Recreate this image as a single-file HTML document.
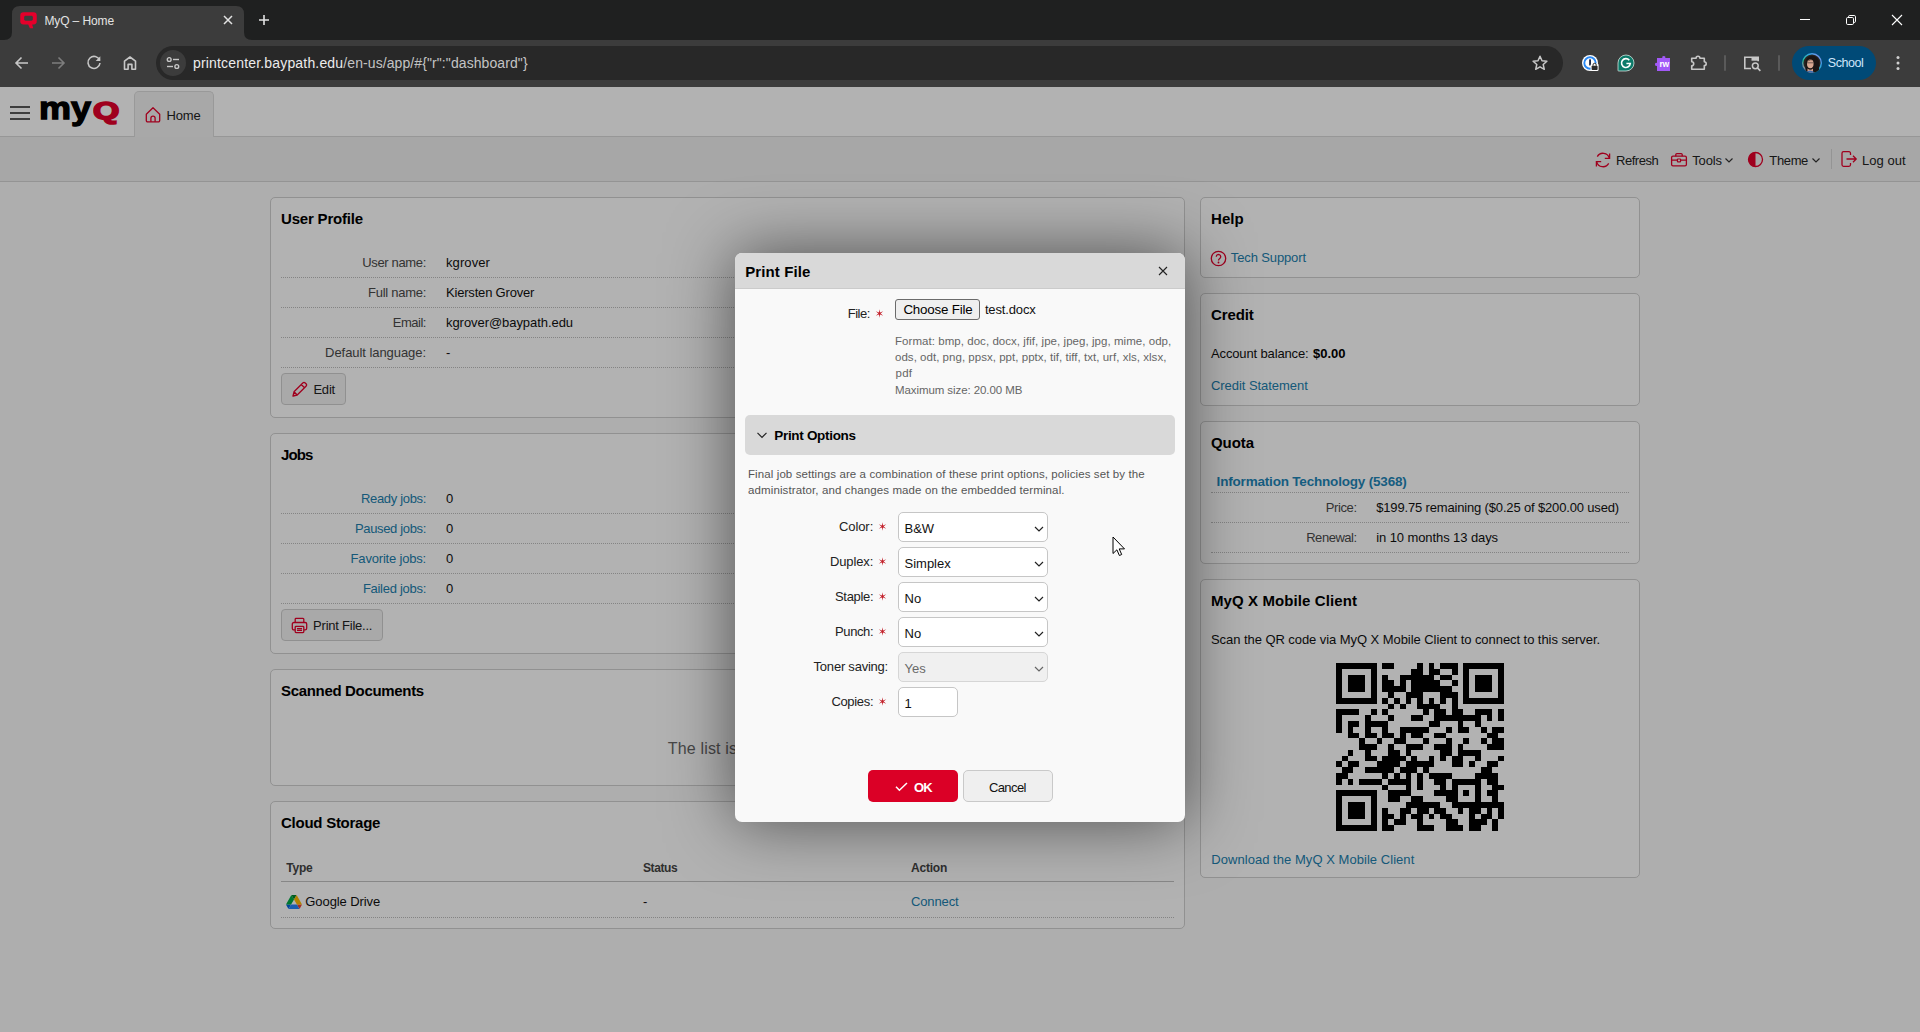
<!DOCTYPE html>
<html lang="en"><head><meta charset="utf-8"><title>MyQ – Home</title>
<style>
html,body{margin:0;padding:0;background:#3c3c3c}
#root{position:relative;width:1920px;height:1032px;overflow:hidden;font-family:'Liberation Sans',sans-serif;font-size:13px}
#root div,#root svg,#root .t{position:absolute;box-sizing:border-box}
#chrome,#page,#dlgwrap{left:0;top:0;width:1920px;height:1032px}
#overlay{left:0;top:87px;width:1920px;height:945px;background:rgba(0,0,0,.3)}
#dlgwrap{pointer-events:none}
.t{white-space:pre;display:block}
.dot{border-top:1px dotted #bdbdbd;height:0}
.panel{background:#fff;border:1px solid #d0d0d0;border-radius:5px}
.btn{background:#f3f3f3;border:1px solid #cfcfcf;border-radius:4px}
.sel{background:#fff;border:1px solid #c6c6c6;border-radius:5px}

</style></head>
<body>
<div id="root">
<div id="chrome">
<div style="left:0px;top:0px;width:1920px;height:40px;background:#1f2020"></div>
<div style="left:0px;top:40px;width:1920px;height:47px;background:#3c3c3c"></div>
<svg style="left:4px;top:6px;" width="248" height="34" viewBox="0 0 248 34"><path d="M0 34 Q8 34 8 26 V8 Q8 0 16 0 H232 Q240 0 240 8 V26 Q240 34 248 34 Z" fill="#3c3c3c"/></svg>
<svg style="left:18.5px;top:10.5px;" width="19" height="19" viewBox="0 0 18 18"><path d="M4.2 1.2h9.6a3 3 0 0 1 3 3v5.6a3 3 0 0 1-3 3h-1.3l1 3.6h-3.2l-1.6-3.6H4.2a3 3 0 0 1-3-3V4.2a3 3 0 0 1 3-3z" fill="#e4002b"/><rect x="4.9" y="4.6" width="8.2" height="4.6" rx="1.4" fill="#3c3c3c"/></svg>
<svg style="left:220px;top:12px;" width="16" height="16" viewBox="0 0 16 16"><path d="M4 4l8 8M12 4l-8 8" stroke="#e3e3e3" stroke-width="1.5" fill="none"/></svg>
<svg style="left:256px;top:12px;" width="16" height="16" viewBox="0 0 16 16"><path d="M8 3v10M3 8h10" stroke="#e3e3e3" stroke-width="1.6" fill="none"/></svg>
<svg style="left:1799px;top:14px;" width="12" height="12" viewBox="0 0 12 12"><path d="M1 5.500h10" stroke="#fff" stroke-width="1"/></svg>
<svg style="left:1845px;top:14px;" width="12" height="12" viewBox="0 0 12 12"><rect x="1.5" y="3.5" width="7" height="7" rx="1.2" fill="none" stroke="#fff"/><path d="M3.500 3.200V2.800a1.300 1.300 0 0 1 1.300-1.300H9.200a1.300 1.300 0 0 1 1.300 1.300V7.200a1.300 1.300 0 0 1-1.300 1.300H8.800" fill="none" stroke="#fff"/></svg>
<svg style="left:1891px;top:14px;" width="12" height="12" viewBox="0 0 12 12"><path d="M1 1l10 10M11 1L1 11" stroke="#fff" stroke-width="1.1"/></svg>
<svg style="left:13px;top:54px;" width="18" height="18" viewBox="0 0 18 18"><path d="M15 9H3.500M8.500 3.500L3 9l5.500 5.500" fill="none" stroke="#c7c7c7" stroke-width="1.6"/></svg>
<svg style="left:49px;top:54px;" width="18" height="18" viewBox="0 0 18 18"><path d="M3 9h11.500M9.500 3.500L15 9l-5.500 5.500" fill="none" stroke="#7d7d7d" stroke-width="1.6"/></svg>
<svg style="left:85px;top:54px;" width="18" height="18" viewBox="0 0 18 18"><path d="M14.600 6.200A6 6 0 1 0 15 9" fill="none" stroke="#c7c7c7" stroke-width="1.6"/><path d="M15.300 2.300v4.600h-4.600z" fill="#c7c7c7"/></svg>
<svg style="left:121px;top:54px;" width="18" height="18" viewBox="0 0 18 18"><path d="M3.500 15.200V7.200L9 3l5.500 4.200v8h-3.600v-4.800H7.100v4.800z" fill="none" stroke="#c7c7c7" stroke-width="1.6" stroke-linejoin="round"/></svg>
<div style="left:156px;top:46px;width:1407px;height:34px;background:#282828;border-radius:17px"></div>
<div style="left:160px;top:50px;width:26px;height:26px;background:#3c3c3c;border-radius:13px"></div>
<svg style="left:165px;top:55px;" width="16" height="16" viewBox="0 0 16 16"><circle cx="4.200" cy="4.500" r="1.900" fill="none" stroke="#c7c7c7" stroke-width="1.400"/><path d="M8 4.500h6" stroke="#c7c7c7" stroke-width="1.400"/><circle cx="11.800" cy="11.500" r="1.900" fill="none" stroke="#c7c7c7" stroke-width="1.400"/><path d="M2 11.500h6" stroke="#c7c7c7" stroke-width="1.400"/></svg>
<svg style="left:1531px;top:54px;" width="18" height="18" viewBox="0 0 18 18"><path d="M9 2.300l2 4.500 4.900.450-3.700 3.250 1.100 4.800L9 12.800 4.700 15.300l1.100-4.800L2.100 7.250 7 6.800z" fill="none" stroke="#c7c7c7" stroke-width="1.500" stroke-linejoin="round"/></svg>
<svg style="left:1580px;top:53px;" width="20" height="20" viewBox="0 0 20 20"><circle cx="10" cy="10" r="8" fill="#fff"/><circle cx="10" cy="10" r="5.700" fill="#fff" stroke="#2a8af6" stroke-width="1.900"/><rect x="9.100" y="6.200" width="1.900" height="6.400" rx=".5" fill="#1b2a4a"/><rect x="10.600" y="10.600" width="8" height="7.400" rx="1.500" fill="#fff"/><rect x="11.600" y="12.800" width="6" height="4.300" rx=".8" fill="#2b2b2b"/><path d="M13 12.800v-.9a1.600 1.600 0 0 1 3.200 0v.9" fill="none" stroke="#2b2b2b" stroke-width="1"/></svg>
<svg style="left:1616px;top:53px;" width="20" height="20" viewBox="0 0 20 20"><path d="M10 2a8 8 0 1 1 0 16H2.600a.6.600 0 0 1-.6-.6V10a8 8 0 0 1 8-8z" fill="#0c7a69" stroke="#e9f5f2" stroke-width=".7"/><path d="M13.300 7.200A4.400 4.400 0 1 0 14.300 10.500H10.400" fill="none" stroke="#fff" stroke-width="1.600"/></svg>
<svg style="left:1652px;top:53px;" width="20" height="20" viewBox="0 0 20 20"><path d="M5 5h5.400a1.500 1.500 0 1 1 2.800 0H18v13H5v-5.300a1.500 1.500 0 1 1 0-2.800z" fill="#a259f7"/></svg>
<svg style="left:1688px;top:53px;" width="20" height="20" viewBox="0 0 20 20"><path d="M3.700 5.200h4.400a1.900 1.900 0 1 1 3.800 0h4.400v3.600a1.900 1.900 0 1 1 0 3.800v3.600H3.700v-3.400a2 2 0 1 0 0-4z" fill="none" stroke="#c7c7c7" stroke-width="1.600" stroke-linejoin="round"/></svg>
<div style="left:1724px;top:55px;width:2px;height:16px;background:#5a5a5a;border-radius:1px"></div>
<svg style="left:1742px;top:54px;" width="20" height="18" viewBox="0 0 20 18"><path d="M9 14.500H2.800V3.200h13.400v4" fill="none" stroke="#c7c7c7" stroke-width="1.600"/><path d="M9.500 3.200h6.700v3.500H9.500z" fill="#c7c7c7"/><circle cx="13.300" cy="11.800" r="2.900" fill="none" stroke="#c7c7c7" stroke-width="1.500"/><path d="M15.400 13.900l3 3" stroke="#c7c7c7" stroke-width="1.600"/></svg>
<div style="left:1778px;top:55px;width:2px;height:16px;background:#5a5a5a;border-radius:1px"></div>
<div style="left:1792px;top:46px;width:84px;height:34px;background:#004a77;border-radius:17px"></div>
<svg style="left:1802px;top:53px;" width="20" height="20" viewBox="0 0 20 20"><defs><clipPath id="av"><circle cx="10" cy="10" r="10"/></clipPath><linearGradient id="avg" x1="0" y1="1" x2="1" y2="0"><stop offset="0" stop-color="#e0559a"/><stop offset=".35" stop-color="#25c2a0"/><stop offset=".7" stop-color="#3aa0e8"/><stop offset="1" stop-color="#b58cf0"/></linearGradient></defs><g clip-path="url(#av)"><rect width="20" height="20" fill="url(#avg)"/><circle cx="10" cy="10" r="8.600" fill="#2a2422"/><path d="M3.500 20V9.500a6.800 6.800 0 0 1 13.600 0V20z" fill="#1b1514"/><ellipse cx="8.300" cy="10.800" rx="3.300" ry="4.400" fill="#d9a892"/><path d="M4.600 9.300Q8 4.500 12.500 8.500 10 6.800 8.200 7.200T4.600 9.300z" fill="#1b1514"/><path d="M5 9.800h6.500" stroke="#4a3d3a" stroke-width=".7"/><path d="M5.500 15.500q3 2.500 5.500 0v4.500H5.500z" fill="#d2a08c"/><path d="M3 20q5-5 10.500 0z" fill="#3d6fb0"/></g></svg>
<svg style="left:1892px;top:53px;" width="12" height="20" viewBox="0 0 12 20"><circle cx="6" cy="4.500" r="1.500" fill="#d0d0d0"/><circle cx="6" cy="10" r="1.500" fill="#d0d0d0"/><circle cx="6" cy="15.500" r="1.500" fill="#d0d0d0"/></svg>
<span class="t" style="left:44.40px;top:13.00px;font-size:12px;line-height:16px;color:#e3e3e3;letter-spacing:-0.109px;">MyQ – Home</span>
<span class="t" style="left:193.00px;top:54.00px;font-size:14px;line-height:18px;color:#ececec;letter-spacing:0.172px;">printcenter.baypath.edu</span>
<span class="t" style="left:343.30px;top:54.00px;font-size:14px;line-height:18px;color:#c4c4c4;letter-spacing:0.090px;">/en-us/app/#{&quot;r&quot;:&quot;dashboard&quot;}</span>
<span class="t" style="left:1659.60px;top:58.00px;font-size:8.5px;line-height:12px;color:#fff;font-weight:700;letter-spacing:-0.461px;">rw</span>
<span class="t" style="left:1827.80px;top:55.00px;font-size:12.5px;line-height:16px;color:#cfe6fb;letter-spacing:-0.439px;">School</span>
</div>
<div id="page">
<div style="left:0px;top:87px;width:1920px;height:945px;background:#f9f9f9"></div>
<div style="left:0px;top:87px;width:1920px;height:49px;background:#fff"></div>
<div style="left:0px;top:136px;width:1920px;height:45px;background:#f0f0f0;border-top:1px solid #d8d8d8"></div>
<div style="left:0px;top:181px;width:1920px;height:1px;background:#d4d4d4"></div>
<div style="left:134px;top:91px;width:80px;height:46px;background:#f1f1f1;border:1px solid #dcdcdc;border-bottom:none;border-radius:5px 5px 0 0"></div>
<div style="left:10px;top:106px;width:20px;height:2px;background:#585858"></div>
<div style="left:10px;top:112px;width:20px;height:2px;background:#585858"></div>
<div style="left:10px;top:118px;width:20px;height:2px;background:#585858"></div>
<svg style="left:144px;top:106px;" width="18" height="18" viewBox="0 0 18 18"><path d="M2.300 8.200L9 1.800l6.700 6.400v6.300a1.400 1.400 0 0 1-1.400 1.400H3.700a1.400 1.400 0 0 1-1.400-1.400z" fill="none" stroke="#e4002b" stroke-width="1.300" stroke-linejoin="round"/><path d="M6.900 15.800v-3.600a2.100 2.100 0 0 1 4.200 0v3.600" fill="none" stroke="#e4002b" stroke-width="1.300"/></svg>
<svg style="left:1594px;top:151px;" width="18" height="18" viewBox="0 0 18 18"><path d="M15.300 7.200A6.500 6.500 0 0 0 3.300 5.600M2.700 10.800a6.500 6.500 0 0 0 12 1.600" fill="none" stroke="#e4002b" stroke-width="1.300"/><path d="M15.600 2.600v4.800h-4.800M2.400 15.400v-4.800h4.800" fill="none" stroke="#e4002b" stroke-width="1.300"/></svg>
<svg style="left:1670px;top:151px;" width="18" height="18" viewBox="0 0 18 18"><rect x="1.600" y="5.200" width="14.800" height="9.600" rx="1.400" fill="none" stroke="#e4002b" stroke-width="1.300"/><path d="M5.800 5.200V3.600a1 1 0 0 1 1-1h4.400a1 1 0 0 1 1 1v1.600M1.600 9.200h14.800" fill="none" stroke="#e4002b" stroke-width="1.300"/><rect x="7.400" y="8" width="3.200" height="2.800" rx=".6" fill="#f3f3f3" stroke="#e4002b" stroke-width="1.200"/></svg>
<svg style="left:1724px;top:155px;" width="10" height="10" viewBox="0 0 10 10"><path d="M1.500 3.500L5 7l3.500-3.500" fill="none" stroke="#333" stroke-width="1.200"/></svg>
<svg style="left:1747px;top:151px;" width="17" height="17" viewBox="0 0 17 17"><circle cx="8.500" cy="8.500" r="7" fill="none" stroke="#e4002b" stroke-width="1.300"/><path d="M8.500 1.500a7 7 0 0 0 0 14z" fill="#e4002b"/></svg>
<svg style="left:1811px;top:155px;" width="10" height="10" viewBox="0 0 10 10"><path d="M1.500 3.500L5 7l3.500-3.500" fill="none" stroke="#333" stroke-width="1.200"/></svg>
<div style="left:1831px;top:149px;width:1px;height:20px;background:#d4d4d4"></div>
<svg style="left:1840px;top:150px;" width="18" height="18" viewBox="0 0 18 18"><path d="M10.500 5V3.200a1.500 1.500 0 0 0-1.500-1.500H3.500A1.500 1.500 0 0 0 2 3.200v11.600a1.500 1.500 0 0 0 1.500 1.500H9a1.500 1.500 0 0 0 1.500-1.500V13" fill="none" stroke="#e4002b" stroke-width="1.300"/><path d="M6.500 9H16M13 5.800L16.200 9 13 12.200" fill="none" stroke="#e4002b" stroke-width="1.300"/></svg>
<div class="panel" style="left:270px;top:197px;width:915px;height:221px"></div>
<div class="dot" style="left:281px;top:277px;width:893px"></div>
<div class="dot" style="left:281px;top:307px;width:893px"></div>
<div class="dot" style="left:281px;top:337px;width:893px"></div>
<div class="dot" style="left:281px;top:367px;width:893px"></div>
<div class="btn" style="left:281px;top:373px;width:65px;height:32px"></div>
<svg style="left:291px;top:381px;" width="17" height="17" viewBox="0 0 17 17"><path d="M2 15l1-4.200L11.800 2a1.700 1.700 0 0 1 2.400 0l.8.8a1.700 1.700 0 0 1 0 2.400L6.200 14z M10.300 3.500l3.200 3.200 M3 10.800L6.200 14" fill="none" stroke="#e4002b" stroke-width="1.300" stroke-linejoin="round"/></svg>
<div class="panel" style="left:270px;top:433px;width:915px;height:221px"></div>
<div class="dot" style="left:281px;top:513px;width:893px"></div>
<div class="dot" style="left:281px;top:543px;width:893px"></div>
<div class="dot" style="left:281px;top:573px;width:893px"></div>
<div class="dot" style="left:281px;top:603px;width:893px"></div>
<div class="btn" style="left:281px;top:609px;width:102px;height:32px"></div>
<svg style="left:291px;top:617px;" width="17" height="17" viewBox="0 0 17 17"><path d="M4.200 5.500V2.200a.8.800 0 0 1 .8-.8h7a.8.800 0 0 1 .8.800v3.300" fill="none" stroke="#e4002b" stroke-width="1.300"/><rect x="1.300" y="5.500" width="14.400" height="7.400" rx="1.600" fill="none" stroke="#e4002b" stroke-width="1.300"/><rect x="4.200" y="9.400" width="8.600" height="6.200" rx=".8" fill="#f3f3f3" stroke="#e4002b" stroke-width="1.300"/><path d="M6 11.600h5M6 13.400h5" stroke="#e4002b" stroke-width="1.100"/></svg>
<div class="panel" style="left:270px;top:669px;width:915px;height:117px"></div>
<div class="panel" style="left:270px;top:801px;width:915px;height:128px"></div>
<div style="left:281px;top:881px;width:893px;height:1px;background:#c2c2c2"></div>
<svg style="left:286px;top:895px;" width="16" height="14" viewBox="0 0 87.3 78"><path d="M6.600 66.850l3.850 6.650c.8 1.400 1.950 2.500 3.300 3.300L27.500 53H0c0 1.550.4 3.100 1.200 4.500z" fill="#0066da"/><path d="M43.650 25L29.900 1.200c-1.350.8-2.500 1.900-3.300 3.300L1.200 48.500A9.060 9.060 0 0 0 0 53h27.500z" fill="#00ac47"/><path d="M73.550 76.800c1.350-.8 2.500-1.900 3.300-3.300l1.600-2.750L86.100 57.500c.8-1.400 1.200-2.950 1.200-4.500H59.800l5.850 11.500z" fill="#ea4335"/><path d="M43.650 25L57.400 1.200C56.050.4 54.500 0 52.900 0H34.400c-1.600 0-3.150.45-4.500 1.200z" fill="#00832d"/><path d="M59.800 53H27.500L13.750 76.800c1.350.8 2.900 1.200 4.500 1.200h50.800c1.600 0 3.150-.45 4.500-1.200z" fill="#2684fc"/><path d="M73.400 26.500L60.700 4.500c-.8-1.400-1.950-2.500-3.300-3.300L43.650 25 59.800 53h27.450c0-1.550-.4-3.100-1.200-4.500z" fill="#ffba00"/></svg>
<div class="dot" style="left:281px;top:917px;width:893px"></div>
<div class="panel" style="left:1200px;top:197px;width:440px;height:81px"></div>
<svg style="left:1210px;top:250px;" width="17" height="17" viewBox="0 0 17 17"><circle cx="8.500" cy="8.500" r="7.200" fill="none" stroke="#e4002b" stroke-width="1.300"/><path d="M6.300 6.700a2.200 2.200 0 1 1 3.400 1.850c-.8.550-1.200 1-1.200 1.950" fill="none" stroke="#e4002b" stroke-width="1.300"/><circle cx="8.500" cy="12.500" r=".9" fill="#e4002b"/></svg>
<div class="panel" style="left:1200px;top:293px;width:440px;height:113px"></div>
<div class="panel" style="left:1200px;top:421px;width:440px;height:143px"></div>
<div class="dot" style="left:1211px;top:492px;width:418px"></div>
<div class="dot" style="left:1211px;top:522px;width:418px"></div>
<div class="dot" style="left:1211px;top:552px;width:418px"></div>
<div class="panel" style="left:1200px;top:579px;width:440px;height:299px"></div>
<svg style="left:1336px;top:663px;" width="168" height="168" viewBox="0 0 29 29"><path d="M0 0h7v1h-7zM8 0h2v1h-2zM14 0h1v1h-1zM16 0h1v1h-1zM18 0h3v1h-3zM22 0h7v1h-7zM0 1h1v1h-1zM6 1h1v1h-1zM13 1h2v1h-2zM16 1h2v1h-2zM20 1h1v1h-1zM22 1h1v1h-1zM28 1h1v1h-1zM0 2h1v1h-1zM2 2h3v1h-3zM6 2h1v1h-1zM8 2h1v1h-1zM11 2h6v1h-6zM18 2h2v1h-2zM22 2h1v1h-1zM24 2h3v1h-3zM28 2h1v1h-1zM0 3h1v1h-1zM2 3h3v1h-3zM6 3h1v1h-1zM8 3h2v1h-2zM11 3h1v1h-1zM13 3h5v1h-5zM20 3h1v1h-1zM22 3h1v1h-1zM24 3h3v1h-3zM28 3h1v1h-1zM0 4h1v1h-1zM2 4h3v1h-3zM6 4h1v1h-1zM8 4h4v1h-4zM13 4h7v1h-7zM22 4h1v1h-1zM24 4h3v1h-3zM28 4h1v1h-1zM0 5h1v1h-1zM6 5h1v1h-1zM9 5h1v1h-1zM12 5h3v1h-3zM18 5h3v1h-3zM22 5h1v1h-1zM28 5h1v1h-1zM0 6h7v1h-7zM8 6h1v1h-1zM10 6h1v1h-1zM12 6h1v1h-1zM14 6h1v1h-1zM16 6h1v1h-1zM18 6h1v1h-1zM20 6h1v1h-1zM22 6h7v1h-7zM9 7h1v1h-1zM11 7h1v1h-1zM14 7h4v1h-4zM20 7h1v1h-1zM0 8h4v1h-4zM6 8h1v1h-1zM8 8h1v1h-1zM15 8h1v1h-1zM17 8h2v1h-2zM20 8h2v1h-2zM24 8h3v1h-3zM28 8h1v1h-1zM0 9h1v1h-1zM5 9h1v1h-1zM9 9h1v1h-1zM13 9h2v1h-2zM17 9h8v1h-8zM26 9h1v1h-1zM28 9h1v1h-1zM0 10h1v1h-1zM2 10h2v1h-2zM5 10h4v1h-4zM16 10h2v1h-2zM21 10h1v1h-1zM24 10h1v1h-1zM0 11h1v1h-1zM2 11h1v1h-1zM5 11h1v1h-1zM8 11h1v1h-1zM11 11h5v1h-5zM19 11h1v1h-1zM21 11h2v1h-2zM25 11h1v1h-1zM27 11h2v1h-2zM2 12h2v1h-2zM5 12h2v1h-2zM8 12h2v1h-2zM11 12h1v1h-1zM13 12h2v1h-2zM17 12h2v1h-2zM26 12h2v1h-2zM4 13h1v1h-1zM7 13h1v1h-1zM10 13h2v1h-2zM15 13h1v1h-1zM19 13h1v1h-1zM22 13h1v1h-1zM25 13h1v1h-1zM27 13h2v1h-2zM4 14h3v1h-3zM9 14h1v1h-1zM12 14h3v1h-3zM17 14h3v1h-3zM21 14h1v1h-1zM26 14h3v1h-3zM2 15h1v1h-1zM5 15h1v1h-1zM9 15h2v1h-2zM12 15h1v1h-1zM18 15h2v1h-2zM21 15h4v1h-4zM1 16h1v1h-1zM5 16h2v1h-2zM8 16h4v1h-4zM13 16h1v1h-1zM16 16h1v1h-1zM18 16h1v1h-1zM20 16h2v1h-2zM24 16h1v1h-1zM28 16h1v1h-1zM0 17h1v1h-1zM2 17h2v1h-2zM7 17h4v1h-4zM12 17h5v1h-5zM20 17h2v1h-2zM23 17h1v1h-1zM26 17h2v1h-2zM1 18h2v1h-2zM5 18h5v1h-5zM11 18h3v1h-3zM15 18h1v1h-1zM25 18h2v1h-2zM0 19h2v1h-2zM8 19h1v1h-1zM10 19h1v1h-1zM12 19h1v1h-1zM14 19h1v1h-1zM16 19h4v1h-4zM24 19h4v1h-4zM0 20h1v1h-1zM2 20h1v1h-1zM4 20h4v1h-4zM9 20h4v1h-4zM14 20h1v1h-1zM17 20h2v1h-2zM20 20h5v1h-5zM26 20h2v1h-2zM8 21h1v1h-1zM12 21h1v1h-1zM14 21h1v1h-1zM18 21h1v1h-1zM20 21h1v1h-1zM24 21h1v1h-1zM27 21h2v1h-2zM0 22h7v1h-7zM9 22h4v1h-4zM17 22h4v1h-4zM22 22h1v1h-1zM24 22h1v1h-1zM26 22h2v1h-2zM0 23h1v1h-1zM6 23h1v1h-1zM9 23h2v1h-2zM13 23h2v1h-2zM19 23h2v1h-2zM24 23h1v1h-1zM27 23h1v1h-1zM0 24h1v1h-1zM2 24h3v1h-3zM6 24h1v1h-1zM12 24h6v1h-6zM20 24h9v1h-9zM0 25h1v1h-1zM2 25h3v1h-3zM6 25h1v1h-1zM8 25h1v1h-1zM11 25h2v1h-2zM14 25h2v1h-2zM17 25h2v1h-2zM21 25h1v1h-1zM23 25h2v1h-2zM26 25h1v1h-1zM28 25h1v1h-1zM0 26h1v1h-1zM2 26h3v1h-3zM6 26h1v1h-1zM8 26h2v1h-2zM11 26h1v1h-1zM13 26h2v1h-2zM16 26h1v1h-1zM18 26h2v1h-2zM23 26h1v1h-1zM25 26h2v1h-2zM28 26h1v1h-1zM0 27h1v1h-1zM6 27h1v1h-1zM8 27h1v1h-1zM10 27h2v1h-2zM14 27h1v1h-1zM19 27h2v1h-2zM23 27h3v1h-3zM27 27h1v1h-1zM0 28h7v1h-7zM8 28h2v1h-2zM14 28h3v1h-3zM19 28h3v1h-3zM23 28h2v1h-2zM27 28h1v1h-1z" fill="#000" shape-rendering="crispEdges"/></svg>
<span class="t" style="left:38.60px;top:89.00px;font-size:32px;line-height:38px;color:#000;font-weight:700;-webkit-text-stroke:1.3px #000;transform-origin:0 0;transform:scaleX(1.125);">my</span>
<span class="t" style="left:92.50px;top:96.00px;font-size:24.5px;line-height:29px;color:#e4002b;font-weight:700;-webkit-text-stroke:1.7px #e4002b;transform-origin:0 0;transform:scaleX(1.38);">Q</span>
<span class="t" style="left:166.40px;top:107.00px;font-size:13px;line-height:17px;color:#222;letter-spacing:-0.072px;">Home</span>
<span class="t" style="left:1616.00px;top:152.00px;font-size:13px;line-height:17px;color:#222;letter-spacing:-0.462px;">Refresh</span>
<span class="t" style="left:1692.30px;top:152.00px;font-size:13px;line-height:17px;color:#222;letter-spacing:-0.192px;">Tools</span>
<span class="t" style="left:1769.30px;top:152.00px;font-size:13px;line-height:17px;color:#222;letter-spacing:-0.354px;">Theme</span>
<span class="t" style="left:1862.00px;top:152.00px;font-size:13px;line-height:17px;color:#222;letter-spacing:0.046px;">Log out</span>
<span class="t" style="left:281.00px;top:209.00px;font-size:15px;line-height:19px;color:#000;font-weight:700;letter-spacing:-0.184px;">User Profile</span>
<span class="t" style="left:362.30px;top:254.00px;font-size:13px;line-height:17px;color:#4a4a4a;letter-spacing:-0.350px;">User name:</span>
<span class="t" style="left:446.00px;top:254.00px;font-size:13px;line-height:17px;color:#111;letter-spacing:0.092px;">kgrover</span>
<span class="t" style="left:368.10px;top:284.00px;font-size:13px;line-height:17px;color:#4a4a4a;letter-spacing:-0.280px;">Full name:</span>
<span class="t" style="left:446.00px;top:284.00px;font-size:13px;line-height:17px;color:#111;letter-spacing:-0.190px;">Kiersten Grover</span>
<span class="t" style="left:392.80px;top:314.00px;font-size:13px;line-height:17px;color:#4a4a4a;letter-spacing:-0.487px;">Email:</span>
<span class="t" style="left:446.00px;top:314.00px;font-size:13px;line-height:17px;color:#111;letter-spacing:-0.058px;">kgrover@baypath.edu</span>
<span class="t" style="left:325.10px;top:344.00px;font-size:13px;line-height:17px;color:#4a4a4a;letter-spacing:-0.060px;">Default language:</span>
<span class="t" style="left:446.00px;top:344.00px;font-size:13px;line-height:17px;color:#111;">-</span>
<span class="t" style="left:313.40px;top:381.00px;font-size:13px;line-height:17px;color:#222;letter-spacing:-0.202px;">Edit</span>
<span class="t" style="left:281.00px;top:445.00px;font-size:15px;line-height:19px;color:#000;font-weight:700;letter-spacing:-0.854px;">Jobs</span>
<span class="t" style="left:361.00px;top:490.00px;font-size:13px;line-height:17px;color:#217fae;letter-spacing:-0.332px;">Ready jobs:</span>
<span class="t" style="left:446.00px;top:490.00px;font-size:13px;line-height:17px;color:#111;">0</span>
<span class="t" style="left:355.00px;top:520.00px;font-size:13px;line-height:17px;color:#217fae;letter-spacing:-0.348px;">Paused jobs:</span>
<span class="t" style="left:446.00px;top:520.00px;font-size:13px;line-height:17px;color:#111;">0</span>
<span class="t" style="left:350.60px;top:550.00px;font-size:13px;line-height:17px;color:#217fae;letter-spacing:-0.189px;">Favorite jobs:</span>
<span class="t" style="left:446.00px;top:550.00px;font-size:13px;line-height:17px;color:#111;">0</span>
<span class="t" style="left:362.90px;top:580.00px;font-size:13px;line-height:17px;color:#217fae;letter-spacing:-0.282px;">Failed jobs:</span>
<span class="t" style="left:446.00px;top:580.00px;font-size:13px;line-height:17px;color:#111;">0</span>
<span class="t" style="left:313.10px;top:617.00px;font-size:13px;line-height:17px;color:#222;letter-spacing:-0.233px;">Print File...</span>
<span class="t" style="left:281.00px;top:681.00px;font-size:15px;line-height:19px;color:#000;font-weight:700;letter-spacing:-0.322px;">Scanned Documents</span>
<span class="t" style="left:667.80px;top:739.00px;font-size:16px;line-height:19px;color:#666;letter-spacing:0.165px;">The list is empty</span>
<span class="t" style="left:281.00px;top:813.00px;font-size:15px;line-height:19px;color:#000;font-weight:700;letter-spacing:-0.255px;">Cloud Storage</span>
<span class="t" style="left:286.30px;top:860.00px;font-size:12px;line-height:16px;color:#444;font-weight:700;letter-spacing:-0.231px;">Type</span>
<span class="t" style="left:643.00px;top:860.00px;font-size:12px;line-height:16px;color:#444;font-weight:700;letter-spacing:-0.398px;">Status</span>
<span class="t" style="left:911.00px;top:860.00px;font-size:12px;line-height:16px;color:#444;font-weight:700;letter-spacing:-0.224px;">Action</span>
<span class="t" style="left:305.30px;top:893.00px;font-size:13px;line-height:17px;color:#111;letter-spacing:-0.081px;">Google Drive</span>
<span class="t" style="left:643.00px;top:893.00px;font-size:13px;line-height:17px;color:#111;">-</span>
<span class="t" style="left:911.00px;top:893.00px;font-size:13px;line-height:17px;color:#217fae;letter-spacing:-0.132px;">Connect</span>
<span class="t" style="left:1211.00px;top:209.00px;font-size:15px;line-height:19px;color:#000;font-weight:700;letter-spacing:0.046px;">Help</span>
<span class="t" style="left:1230.80px;top:249.00px;font-size:13px;line-height:17px;color:#217fae;letter-spacing:-0.126px;">Tech Support</span>
<span class="t" style="left:1211.00px;top:305.00px;font-size:15px;line-height:19px;color:#000;font-weight:700;letter-spacing:-0.124px;">Credit</span>
<span class="t" style="left:1211.00px;top:345.00px;font-size:13px;line-height:17px;color:#111;letter-spacing:-0.140px;">Account balance:</span>
<span class="t" style="left:1312.90px;top:345.00px;font-size:13px;line-height:17px;color:#000;font-weight:700;letter-spacing:0.031px;">$0.00</span>
<span class="t" style="left:1211.00px;top:377.00px;font-size:13px;line-height:17px;color:#217fae;letter-spacing:-0.053px;">Credit Statement</span>
<span class="t" style="left:1211.00px;top:433.00px;font-size:15px;line-height:19px;color:#000;font-weight:700;letter-spacing:-0.069px;">Quota</span>
<span class="t" style="left:1216.60px;top:473.00px;font-size:13.5px;line-height:17px;color:#1f86b8;font-weight:700;letter-spacing:-0.191px;">Information Technology (5368)</span>
<span class="t" style="left:1325.70px;top:499.00px;font-size:13px;line-height:17px;color:#4a4a4a;letter-spacing:-0.372px;">Price:</span>
<span class="t" style="left:1376.20px;top:499.00px;font-size:13px;line-height:17px;color:#111;letter-spacing:-0.160px;">$199.75 remaining ($0.25 of $200.00 used)</span>
<span class="t" style="left:1306.20px;top:529.00px;font-size:13px;line-height:17px;color:#4a4a4a;letter-spacing:-0.463px;">Renewal:</span>
<span class="t" style="left:1376.20px;top:529.00px;font-size:13px;line-height:17px;color:#111;letter-spacing:-0.089px;">in 10 months 13 days</span>
<span class="t" style="left:1211.00px;top:591.00px;font-size:15px;line-height:19px;color:#000;font-weight:700;letter-spacing:0.095px;">MyQ X Mobile Client</span>
<span class="t" style="left:1211.00px;top:631.00px;font-size:13px;line-height:17px;color:#111;letter-spacing:-0.061px;">Scan the QR code via MyQ X Mobile Client to connect to this server.</span>
<span class="t" style="left:1211.30px;top:851.00px;font-size:13px;line-height:17px;color:#217fae;letter-spacing:0.044px;">Download the MyQ X Mobile Client</span>
</div>
<div id="overlay"></div>
<div id="dlgwrap">
<div style="left:735px;top:253px;width:450px;height:569px;background:#f9f9f9;border-radius:7px;box-shadow:0 0 66px rgba(0,0,0,.56)"></div>
<div style="left:735px;top:253px;width:450px;height:36px;background:#d9d9d9;border-radius:7px 7px 0 0;border-bottom:1px solid #cbcbcb"></div>
<svg style="left:1157px;top:265px;" width="12" height="12" viewBox="0 0 12 12"><path d="M2 2l8 8M10 2l-8 8" stroke="#222" stroke-width="1.100" fill="none"/></svg>
<svg style="left:874.6px;top:309.3px;" width="9" height="9" viewBox="0 0 9 9"><path d="M4.50 0.20L5.08 3.50L8.22 2.35L5.65 4.50L8.22 6.65L5.08 5.50L4.50 8.80L3.93 5.50L0.78 6.65L3.35 4.50L0.78 2.35L3.92 3.50z" fill="#c4242e"/></svg>
<div style="left:895px;top:299px;width:85px;height:21px;background:#efefef;border:1px solid #6b6b6b;border-radius:3px"></div>
<div style="left:745px;top:415px;width:430px;height:40px;background:#d9d9d9;border-radius:5px"></div>
<svg style="left:756px;top:429px;" width="12" height="12" viewBox="0 0 12 12"><path d="M1.500 3.800L6 8.300l4.500-4.500" fill="none" stroke="#222" stroke-width="1.200"/></svg>
<svg style="left:877.6px;top:522.2px;" width="9" height="9" viewBox="0 0 9 9"><path d="M4.50 0.20L5.08 3.50L8.22 2.35L5.65 4.50L8.22 6.65L5.08 5.50L4.50 8.80L3.93 5.50L0.78 6.65L3.35 4.50L0.78 2.35L3.92 3.50z" fill="#c4242e"/></svg>
<div class="sel" style="left:898px;top:512px;width:150px;height:30px;"></div>
<svg style="left:1032.5px;top:522.7px;" width="12" height="12" viewBox="0 0 12 12"><path d="M2 4l4 4 4-4" fill="none" stroke="#222" stroke-width="1.200"/></svg>
<svg style="left:877.6px;top:557.2px;" width="9" height="9" viewBox="0 0 9 9"><path d="M4.50 0.20L5.08 3.50L8.22 2.35L5.65 4.50L8.22 6.65L5.08 5.50L4.50 8.80L3.93 5.50L0.78 6.65L3.35 4.50L0.78 2.35L3.92 3.50z" fill="#c4242e"/></svg>
<div class="sel" style="left:898px;top:547px;width:150px;height:30px;"></div>
<svg style="left:1032.5px;top:557.7px;" width="12" height="12" viewBox="0 0 12 12"><path d="M2 4l4 4 4-4" fill="none" stroke="#222" stroke-width="1.200"/></svg>
<svg style="left:877.6px;top:592.2px;" width="9" height="9" viewBox="0 0 9 9"><path d="M4.50 0.20L5.08 3.50L8.22 2.35L5.65 4.50L8.22 6.65L5.08 5.50L4.50 8.80L3.93 5.50L0.78 6.65L3.35 4.50L0.78 2.35L3.92 3.50z" fill="#c4242e"/></svg>
<div class="sel" style="left:898px;top:582px;width:150px;height:30px;"></div>
<svg style="left:1032.5px;top:592.7px;" width="12" height="12" viewBox="0 0 12 12"><path d="M2 4l4 4 4-4" fill="none" stroke="#222" stroke-width="1.200"/></svg>
<svg style="left:877.6px;top:627.2px;" width="9" height="9" viewBox="0 0 9 9"><path d="M4.50 0.20L5.08 3.50L8.22 2.35L5.65 4.50L8.22 6.65L5.08 5.50L4.50 8.80L3.93 5.50L0.78 6.65L3.35 4.50L0.78 2.35L3.92 3.50z" fill="#c4242e"/></svg>
<div class="sel" style="left:898px;top:617px;width:150px;height:30px;"></div>
<svg style="left:1032.5px;top:627.7px;" width="12" height="12" viewBox="0 0 12 12"><path d="M2 4l4 4 4-4" fill="none" stroke="#222" stroke-width="1.200"/></svg>
<div class="sel" style="left:898px;top:652px;width:150px;height:30px;background:#f0f0f0;border-color:#d6d6d6;"></div>
<svg style="left:1032.5px;top:662.7px;" width="12" height="12" viewBox="0 0 12 12"><path d="M2 4l4 4 4-4" fill="none" stroke="#666" stroke-width="1.200"/></svg>
<svg style="left:877.6px;top:697.2px;" width="9" height="9" viewBox="0 0 9 9"><path d="M4.50 0.20L5.08 3.50L8.22 2.35L5.65 4.50L8.22 6.65L5.08 5.50L4.50 8.80L3.93 5.50L0.78 6.65L3.35 4.50L0.78 2.35L3.92 3.50z" fill="#c4242e"/></svg>
<div class="sel" style="left:898px;top:687px;width:60px;height:30px;"></div>
<div style="left:868px;top:770px;width:90px;height:32px;background:#db0026;border-radius:5px"></div>
<svg style="left:893.5px;top:779.5px;" width="15" height="14" viewBox="0 0 15 14"><path d="M2 6.800l3.400 3.400L13 3" fill="none" stroke="#fff" stroke-width="1.500"/></svg>
<div style="left:963px;top:770px;width:90px;height:32px;background:#efefef;border:1px solid #c9c9c9;border-radius:5px"></div>
<svg style="left:1112px;top:536px;" width="14" height="21" viewBox="0 0 14 21"><path d="M1 1v16.500l3.900-3.700 2.500 5.700 2.300-1-2.500-5.600H12.500z" fill="#fff" stroke="#000" stroke-width="1" stroke-linejoin="round"/></svg>
<span class="t" style="left:745.20px;top:262.00px;font-size:15px;line-height:19px;color:#000;font-weight:700;letter-spacing:0.101px;">Print File</span>
<span class="t" style="left:847.80px;top:305.00px;font-size:13px;line-height:17px;color:#222;letter-spacing:-0.512px;">File:</span>
<span class="t" style="left:903.40px;top:301.00px;font-size:13.33px;line-height:17px;color:#000;letter-spacing:-0.193px;">Choose File</span>
<span class="t" style="left:984.90px;top:301.00px;font-size:13px;line-height:17px;color:#111;letter-spacing:-0.148px;">test.docx</span>
<span class="t" style="left:895.00px;top:334.00px;font-size:11.5px;line-height:14px;color:#666;letter-spacing:0.049px;">Format: bmp, doc, docx, jfif, jpe, jpeg, jpg, mime, odp,</span>
<span class="t" style="left:895.00px;top:350.00px;font-size:11.5px;line-height:14px;color:#666;letter-spacing:0.030px;">ods, odt, png, ppsx, ppt, pptx, tif, tiff, txt, urf, xls, xlsx,</span>
<span class="t" style="left:895.50px;top:366.00px;font-size:11.5px;line-height:14px;color:#666;letter-spacing:0.233px;">pdf</span>
<span class="t" style="left:895.00px;top:383.00px;font-size:11.5px;line-height:14px;color:#666;letter-spacing:-0.082px;">Maximum size: 20.00 MB</span>
<span class="t" style="left:774.30px;top:427.00px;font-size:13.5px;line-height:17px;color:#000;font-weight:700;letter-spacing:-0.315px;">Print Options</span>
<span class="t" style="left:748.00px;top:467.00px;font-size:11.5px;line-height:14px;color:#555;letter-spacing:0.100px;">Final job settings are a combination of these print options, policies set by the</span>
<span class="t" style="left:748.00px;top:483.00px;font-size:11.5px;line-height:14px;color:#555;letter-spacing:0.115px;">administrator, and changes made on the embedded terminal.</span>
<span class="t" style="left:838.90px;top:518.00px;font-size:13px;line-height:17px;color:#222;letter-spacing:-0.065px;">Color:</span>
<span class="t" style="left:904.50px;top:520.00px;font-size:13px;line-height:17px;color:#111;">B&amp;W</span>
<span class="t" style="left:830.00px;top:553.00px;font-size:13px;line-height:17px;color:#222;letter-spacing:-0.125px;">Duplex:</span>
<span class="t" style="left:904.50px;top:555.00px;font-size:13px;line-height:17px;color:#111;">Simplex</span>
<span class="t" style="left:835.00px;top:588.00px;font-size:13px;line-height:17px;color:#222;letter-spacing:-0.326px;">Staple:</span>
<span class="t" style="left:904.50px;top:590.00px;font-size:13px;line-height:17px;color:#111;">No</span>
<span class="t" style="left:835.00px;top:623.00px;font-size:13px;line-height:17px;color:#222;letter-spacing:-0.381px;">Punch:</span>
<span class="t" style="left:904.50px;top:625.00px;font-size:13px;line-height:17px;color:#111;">No</span>
<span class="t" style="left:813.60px;top:658.00px;font-size:13px;line-height:17px;color:#222;letter-spacing:-0.225px;">Toner saving:</span>
<span class="t" style="left:904.50px;top:660.00px;font-size:13px;line-height:17px;color:#6a6a6a;">Yes</span>
<span class="t" style="left:831.40px;top:693.00px;font-size:13px;line-height:17px;color:#222;letter-spacing:-0.325px;">Copies:</span>
<span class="t" style="left:904.50px;top:695.00px;font-size:13px;line-height:17px;color:#111;">1</span>
<span class="t" style="left:913.90px;top:779.00px;font-size:13px;line-height:17px;color:#fff;font-weight:700;letter-spacing:-0.650px;">OK</span>
<span class="t" style="left:988.90px;top:779.00px;font-size:13px;line-height:17px;color:#111;letter-spacing:-0.578px;">Cancel</span>
</div>
</div>
</body></html>
